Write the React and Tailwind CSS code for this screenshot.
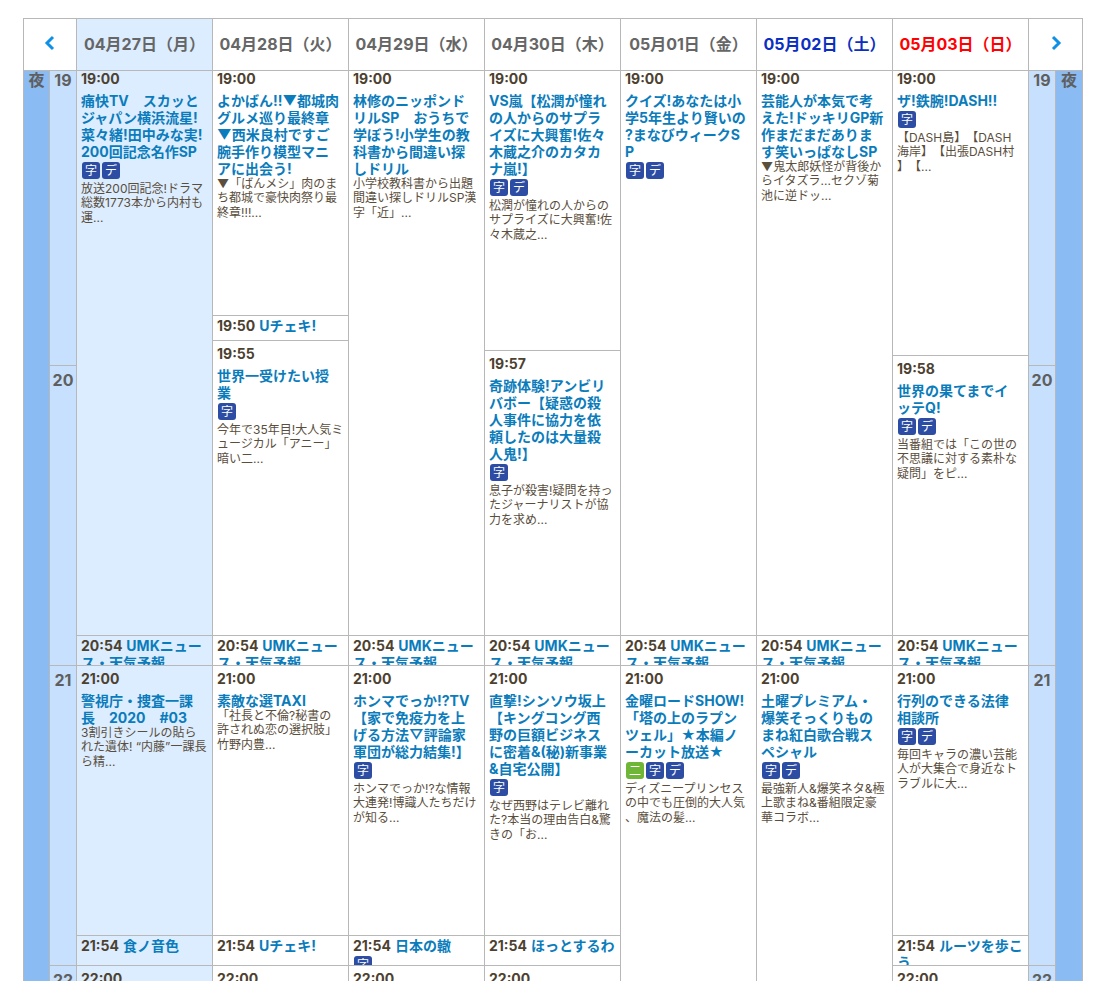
const BAND = "bg-[#8abbf3]";
const HOUR = "bg-[#c6e0fd]";

const news = ["UMKニュー", "ス・天気予報"];

const days = [
  {
    label: "04月27日（月）", head: "text-[#666666]", today: true,
    cells: [
      { h: "h-[565px]", time: "19:00", title: ["痛快TV　スカッと", "ジャパン横浜流星!", "菜々緒!田中みな実!", "200回記念名作SP"], badges: ["字", "デ"], desc: ["放送200回記念!ドラマ", "総数1773本から内村も", "運..."] },
      { h: "h-[30px]", time: "20:54", short: news },
      { h: "h-[270px]", time: "21:00", title: ["警視庁・捜査一課", "長　2020　#03"], desc: ["3割引きシールの貼ら", "れた遺体! “内藤”一課長", "ら精..."] },
      { h: "h-[30px]", time: "21:54", short: ["食ノ音色"] },
      { h: "h-[16px]", time: "22:00" },
    ],
  },
  {
    label: "04月28日（火）", head: "text-[#666666]",
    cells: [
      { h: "h-[245px]", time: "19:00", title: ["よかばん!!▼都城肉", "グルメ巡り最終章", "▼西米良村ですご", "腕手作り模型マニ", "アに出会う!"], desc: ["▼「ばんメシ」肉のま", "ち都城で豪快肉祭り最", "終章!!!..."] },
      { h: "h-[25px]", time: "19:50", short: ["Uチェキ!"] },
      { h: "h-[295px]", time: "19:55", title: ["世界一受けたい授", "業"], badges: ["字"], desc: ["今年で35年目!大人気ミ", "ュージカル「アニー」", "暗い二..."] },
      { h: "h-[30px]", time: "20:54", short: news },
      { h: "h-[270px]", time: "21:00", title: ["素敵な選TAXI"], desc: ["「社長と不倫?秘書の", "許されぬ恋の選択肢」", "竹野内豊..."] },
      { h: "h-[30px]", time: "21:54", short: ["Uチェキ!"] },
      { h: "h-[16px]", time: "22:00" },
    ],
  },
  {
    label: "04月29日（水）", head: "text-[#666666]",
    cells: [
      { h: "h-[565px]", time: "19:00", title: ["林修のニッポンド", "リルSP　おうちで", "学ぼう!小学生の教", "科書から間違い探", "しドリル"], desc: ["小学校教科書から出題", "間違い探しドリルSP漢", "字「近」..."] },
      { h: "h-[30px]", time: "20:54", short: news },
      { h: "h-[270px]", time: "21:00", title: ["ホンマでっか!?TV", "【家で免疫力を上", "げる方法▽評論家", "軍団が総力結集!】"], badges: ["字"], desc: ["ホンマでっか!?な情報", "大連発!博識人たちだけ", "が知る..."] },
      { h: "h-[30px]", time: "21:54", short: ["日本の轍"], badges: ["字"] },
      { h: "h-[16px]", time: "22:00" },
    ],
  },
  {
    label: "04月30日（木）", head: "text-[#666666]",
    cells: [
      { h: "h-[280px]", time: "19:00", title: ["VS嵐【松潤が憧れ", "の人からのサプラ", "イズに大興奮!佐々", "木蔵之介のカタカ", "ナ嵐!】"], badges: ["字", "デ"], desc: ["松潤が憧れの人からの", "サプライズに大興奮!佐", "々木蔵之..."] },
      { h: "h-[285px]", time: "19:57", title: ["奇跡体験!アンビリ", "バボー【疑惑の殺", "人事件に協力を依", "頼したのは大量殺", "人鬼!】"], badges: ["字"], desc: ["息子が殺害!疑問を持っ", "たジャーナリストが協", "力を求め..."] },
      { h: "h-[30px]", time: "20:54", short: news },
      { h: "h-[270px]", time: "21:00", title: ["直撃!シンソウ坂上", "【キングコング西", "野の巨額ビジネス", "に密着&(秘)新事業", "&自宅公開】"], badges: ["字"], desc: ["なぜ西野はテレビ離れ", "た?本当の理由告白&驚", "きの「お..."] },
      { h: "h-[30px]", time: "21:54", short: ["ほっとするわ"] },
      { h: "h-[16px]", time: "22:00" },
    ],
  },
  {
    label: "05月01日（金）", head: "text-[#666666]",
    cells: [
      { h: "h-[565px]", time: "19:00", title: ["クイズ!あなたは小", "学5年生より賢いの", "?まなびウィークS", "P"], badges: ["字", "デ"] },
      { h: "h-[30px]", time: "20:54", short: news },
      { h: "h-[316px]", time: "21:00", title: ["金曜ロードSHOW!", "「塔の上のラプン", "ツェル」★本編ノ", "ーカット放送★"], badges: ["二", "字", "デ"], desc: ["ディズニープリンセス", "の中でも圧倒的大人気", "、魔法の髪..."] },
    ],
  },
  {
    label: "05月02日（土）", head: "text-[#0b2fc2]",
    cells: [
      { h: "h-[565px]", time: "19:00", title: ["芸能人が本気で考", "えた!ドッキリGP新", "作まだまだありま", "す笑いっぱなしSP"], desc: ["▼鬼太郎妖怪が背後か", "らイタズラ...セクゾ菊", "池に逆ドッ..."] },
      { h: "h-[30px]", time: "20:54", short: news },
      { h: "h-[316px]", time: "21:00", title: ["土曜プレミアム・", "爆笑そっくりもの", "まね紅白歌合戦ス", "ペシャル"], badges: ["字", "デ"], desc: ["最強新人&爆笑ネタ&極", "上歌まね&番組限定豪", "華コラボ..."] },
    ],
  },
  {
    label: "05月03日（日）", head: "text-[#ff0000]",
    cells: [
      { h: "h-[285px]", time: "19:00", title: ["ザ!鉄腕!DASH!!"], badges: ["字"], desc: ["【DASH島】【DASH", "海岸】【出張DASH村", "】【..."] },
      { h: "h-[280px]", time: "19:58", title: ["世界の果てまでイ", "ッテQ!"], badges: ["字", "デ"], desc: ["当番組では「この世の", "不思議に対する素朴な", "疑問」をピ..."] },
      { h: "h-[30px]", time: "20:54", short: news },
      { h: "h-[270px]", time: "21:00", title: ["行列のできる法律", "相談所"], badges: ["字", "デ"], desc: ["毎回キャラの濃い芸能", "人が大集合で身近なト", "ラブルに大..."] },
      { h: "h-[30px]", time: "21:54", short: ["ルーツを歩こ", "う"] },
      { h: "h-[16px]", time: "22:00" },
    ],
  },
];

const hours = [
  { n: "19", c: "h-[295px] leading-[19px]" },
  { n: "20", c: "h-[300px] leading-[28px]" },
  { n: "21", c: "h-[300px] leading-[28px]" },
  { n: "22", c: "h-[16px] leading-[28px]" },
];

function Lines({ items }) {
  return items.map((t, i) => (
    <span key={i} className="block whitespace-nowrap">{t}</span>
  ));
}

function Badges({ items, className }) {
  return (
    <div className={`ml-[1px] flex gap-[2px] ${className}`}>
      {items.map((b, i) => (
        <span
          key={i}
          className={`flex h-[17px] w-[18px] items-center justify-center rounded-[3px] text-[12px] leading-none font-normal text-white ${b === "二" ? "bg-[#6fb536]" : "bg-[#2c4da3]"}`}
        >
          {b}
        </span>
      ))}
    </div>
  );
}

function Cell({ cell }) {
  const base = `${cell.h} shrink-0 overflow-hidden border-t border-[#b8b8b8] px-[4px]`;
  if (cell.short) {
    return (
      <div className={`${base} pt-[1px]`}>
        <div className="text-[14px] leading-[17px] font-bold text-[#0b7cbb]">
          <span className="block whitespace-nowrap">
            <span className="mr-[4px] text-[#4d4130]">{cell.time}</span>
            {cell.short[0]}
          </span>
          {cell.short[1] && <span className="block whitespace-nowrap">{cell.short[1]}</span>}
        </div>
        {cell.badges && <Badges items={cell.badges} className="mt-[2px]" />}
      </div>
    );
  }
  const first = cell.time === "19:00";
  return (
    <div className={`${base} ${first ? "" : "pt-[4px]"}`}>
      <div className={`text-[14px] leading-[17px] font-bold text-[#4d4130] ${first ? "-mt-[1px]" : ""}`}>{cell.time}</div>
      {cell.title && (
        <div className="mt-[5px] text-[14px] leading-[17px] font-bold text-[#0b7cbb]">
          <Lines items={cell.title} />
        </div>
      )}
      {cell.badges && <Badges items={cell.badges} className="mt-[2px] mb-[3px]" />}
      {cell.desc && (
        <div className="-mt-[0.5px] text-[12px] leading-[14.5px] text-[#5a4e3c]">
          <Lines items={cell.desc} />
        </div>
      )}
    </div>
  );
}

function Chevron({ right }) {
  return (
    <svg width="12" height="16" viewBox="0 0 12 16" className="mb-[3px] text-[#0d90e8]">
      <polyline
        points={right ? "3,2 9,8 3,14" : "9,2 3,8 9,14"}
        fill="none"
        stroke="currentColor"
        strokeWidth="3"
      />
    </svg>
  );
}

function HourColumn() {
  return (
    <div className={`flex w-[27px] shrink-0 flex-col overflow-hidden border-l border-[#b8b8b8] ${HOUR}`}>
      {hours.map((h) => (
        <div key={h.n} className={`${h.c} shrink-0 overflow-hidden border-t border-[#b8b8b8] text-center text-[16px] font-bold text-[#5f5f5f]`}>
          {h.n}
        </div>
      ))}
    </div>
  );
}

function Band({ className }) {
  return (
    <div className={`${className} shrink-0 border-t border-l border-[#b8b8b8] ${BAND} text-center text-[16px] leading-[19px] font-bold text-[#5f5f5f]`}>
      夜
    </div>
  );
}

export default function App() {
  return (
    <div className="h-[981px] w-[1097px] overflow-hidden bg-white pt-[18px] pl-[23px] font-['Inter','Noto_Sans_CJK_JP',sans-serif] [text-spacing-trim:space-all]">
      <div className="w-[1060px] border-r border-[#b8b8b8]">
        <div className="flex h-[52px] border-t border-[#b8b8b8]">
          <div className="flex w-[53px] shrink-0 items-center justify-center border-l border-[#b8b8b8]">
            <Chevron />
          </div>
          {days.map((d) => (
            <div
              key={d.label}
              className={`flex w-[136px] shrink-0 items-center justify-center border-l border-[#b8b8b8] pb-[2px] text-[16px] font-bold whitespace-nowrap ${d.head} ${d.today ? "bg-[#dcedff]" : ""}`}
            >
              {d.label}
            </div>
          ))}
          <div className="flex grow items-center justify-center border-l border-[#b8b8b8]">
            <Chevron right />
          </div>
        </div>
        <div className="flex h-[911px]">
          <Band className="w-[26px]" />
          <HourColumn />
          {days.map((d) => (
            <div
              key={d.label}
              className={`flex w-[136px] shrink-0 flex-col overflow-hidden border-l border-[#b8b8b8] ${d.today ? "bg-[#dcedff]" : ""}`}
            >
              {d.cells.map((c, i) => (
                <Cell key={i} cell={c} />
              ))}
            </div>
          ))}
          <HourColumn />
          <Band className="w-[27px]" />
        </div>
      </div>
    </div>
  );
}
